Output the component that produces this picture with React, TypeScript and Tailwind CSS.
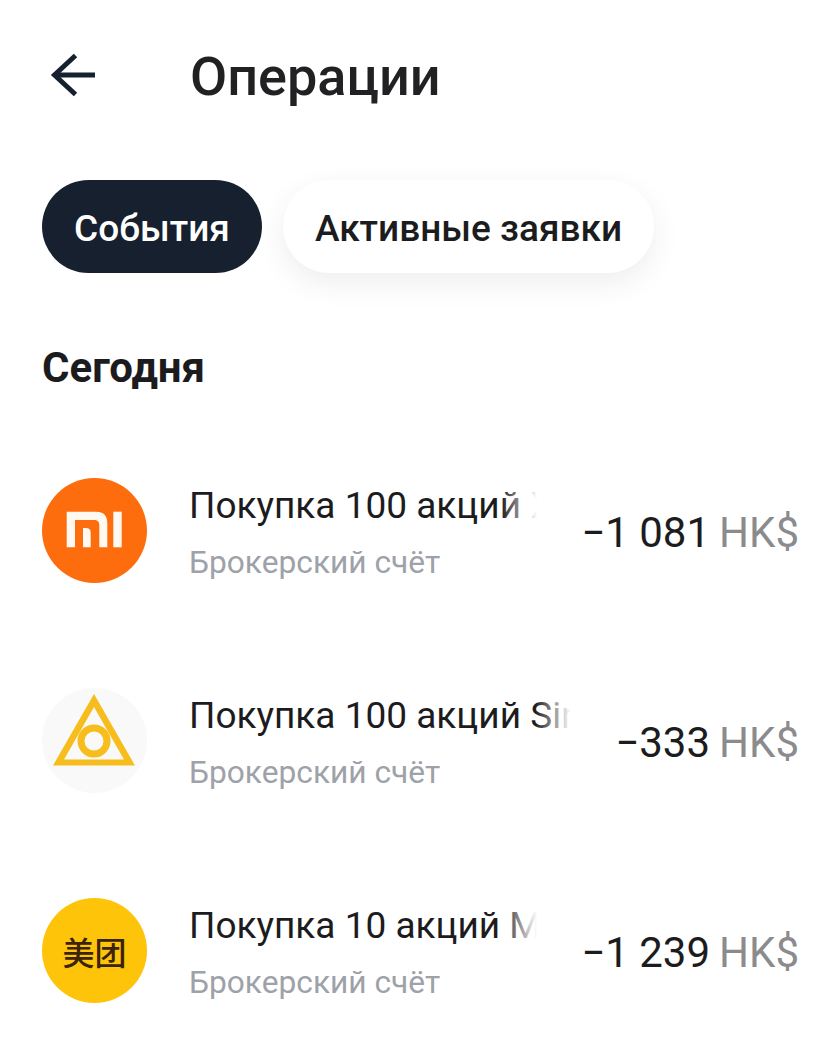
const font = { fontFamily: "Roboto, 'Noto Sans', sans-serif" };

function BackArrow() {
  return (
    <svg width="46" height="44" viewBox="0 0 46 44" fill="none" stroke="#17202e" strokeWidth="5" className="block">
      <path d="M4 22 H45" />
      <path d="M25.5 2.5 L4.5 22 L25.5 41.5" />
    </svg>
  );
}

function MiLogo() {
  return (
    <div className="flex h-[105px] w-[105px] shrink-0 items-center justify-center rounded-full bg-[#fd6d0d]">
      <svg width="105" height="105" viewBox="0 0 105 105" fill="#fff9f2">
        <path d="M24.7 33.7 H54 C61.5 33.7 65.3 37.5 65.3 45 V69.3 H57.3 V47 C57.3 43.5 55.5 42 52 42 H33 V69.3 H24.7 Z" />
        <path d="M41 50 H44 C47 50 48.7 51.5 48.7 54.5 V69.3 H41 Z" />
        <rect x="71.3" y="33.7" width="8.4" height="35.6" />
      </svg>
    </div>
  );
}

function TriangleLogo() {
  return (
    <div className="flex h-[105px] w-[105px] shrink-0 items-center justify-center rounded-full bg-[#f9f9f9]">
      <svg width="105" height="105" viewBox="0 0 105 105">
        <path fillRule="evenodd" fill="#f6bd1d" d="M52 6 L93 77.5 H11 Z M52 19 L22 71.5 H82 Z" />
        <circle cx="52" cy="53" r="13" fill="#f9f9f9" stroke="#f6bd1d" strokeWidth="7" />
      </svg>
    </div>
  );
}

function MeituanLogo() {
  return (
    <div
      className="flex h-[105px] w-[105px] shrink-0 items-center justify-center rounded-full bg-[#fec40a] text-[32px] font-medium leading-none text-[#3b2408]"
      style={{ fontFamily: "'Noto Sans CJK SC', sans-serif" }}
    >
      美团
    </div>
  );
}

function Row({ logo, title, amount }: { logo: React.ReactNode; title: string; amount: string }) {
  return (
    <div className="flex h-[105px] items-center">
      {logo}
      <div className="relative ml-[42px] min-w-0 flex-1 overflow-hidden pt-[6px]">
        <div className="whitespace-nowrap text-[37px] leading-[41px] text-[#1c1c1e]">{title}</div>
        <div className="mt-[17px] whitespace-nowrap text-[31.7px] leading-[40px] text-[#9ea2a8]">Брокерский счёт</div>
        <div className="absolute right-0 top-0 h-[47px] w-[36px] bg-gradient-to-r from-transparent to-white" />
      </div>
      <div className="ml-[44px] flex shrink-0 items-baseline whitespace-nowrap pt-[5px] text-[42px] leading-none">
        <span className="text-[#1c1c1e]">{amount}</span>
        <span className="ml-[9px] text-[#8b8b8e]">HK$</span>
      </div>
    </div>
  );
}

export default function App() {
  return (
    <div className="min-h-[1055px] w-full overflow-hidden bg-white pl-[42px] pr-[40px]" style={font}>
      <div className="flex h-[150px] items-center">
        <div className="ml-[8px] w-[140px]">
          <BackArrow />
        </div>
        <h1 className="pt-[4px] text-[54px] font-medium leading-none text-[#212123]">Операции</h1>
      </div>

      <div className="mt-[30px] flex gap-[21px]">
        <div className="flex h-[93px] w-[220px] items-center justify-center rounded-full bg-[#17202e] pt-[5px] text-[37px] font-medium text-white">
          События
        </div>
        <div className="flex h-[93px] w-[371px] items-center justify-center rounded-full bg-white pt-[5px] text-[37px] font-medium text-[#1c1c1e] shadow-[0_10px_30px_rgba(0,0,0,0.07)]">
          Активные заявки
        </div>
      </div>

      <h2 className="mt-[70px] text-[42px] font-bold leading-[50px] text-[#1c1c1e]">Сегодня</h2>

      <div className="mt-[85px] flex flex-col gap-[105px]">
        <Row logo={<MiLogo />} title="Покупка 100 акций Xiaomi" amount="−1 081" />
        <Row logo={<TriangleLogo />} title="Покупка 100 акций SinoPharm" amount="−333" />
        <Row logo={<MeituanLogo />} title="Покупка 10 акций Meituan" amount="−1 239" />
      </div>
    </div>
  );
}
